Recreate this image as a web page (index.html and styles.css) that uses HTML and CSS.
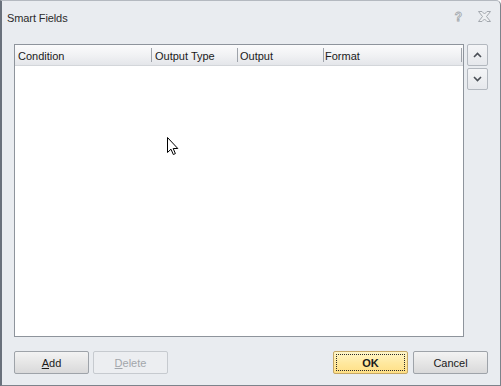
FILE: index.html
```html
<!DOCTYPE html>
<html lang="en">
<head>
	<meta charset="utf-8">
	<title>Smart Fields</title>
	<link rel="stylesheet" href="styles.css">
</head>
<body>
	<div class="window">
		<div class="titlebar">
			<span class="title">Smart Fields</span>
			<span class="help">?</span>
			<svg class="close" width="13" height="11" viewBox="0 0 13 11">
				<path d="M0.5 0.5 H4 L6.5 3 L9 0.5 H12.5 L8.5 5.5 L12.5 10.5 H9 L6.5 8 L4 10.5 H0.5 L4.5 5.5 Z" fill="#eef0f2" stroke="#a3a8ae" stroke-width="1"/>
			</svg>
		</div>
		<div class="content">
			<div class="list">
				<div class="list-head">
					<div class="col col-1">Condition</div>
					<span class="sep"></span>
					<div class="col col-2">Output Type</div>
					<span class="sep"></span>
					<div class="col col-3">Output</div>
					<span class="sep"></span>
					<div class="col col-4">Format</div>
					<span class="sep"></span>
				</div>
				<div class="list-body"></div>
			</div>
			<div class="side">
				<a href="javascript:;" class="move">
					<svg width="9" height="6" viewBox="0 0 9 6"><path d="M1 5 L4.5 1.5 L8 5" fill="none" stroke="#4a4f56" stroke-width="1.6"/></svg>
				</a>
				<a href="javascript:;" class="move">
					<svg width="9" height="6" viewBox="0 0 9 6"><path d="M1 1 L4.5 4.5 L8 1" fill="none" stroke="#4a4f56" stroke-width="1.6"/></svg>
				</a>
			</div>
		</div>
		<div class="footer">
			<div class="group">
				<a href="javascript:;" class="btn"><u>A</u>dd</a>
				<a href="javascript:;" class="btn disabled"><u>D</u>elete</a>
			</div>
			<div class="group">
				<a href="javascript:;" class="btn ok"><span class="focus">OK</span></a>
				<a href="javascript:;" class="btn cancel">Cancel</a>
			</div>
		</div>
		<svg class="cursor" width="12" height="19" viewBox="0 0 12 19">
			<path d="M0.5 0.5 L0.5 15.5 L4 12.2 L6.3 17.5 L8.4 16.6 L6.2 11.5 L10.8 11.5 Z" fill="#fff" stroke="#000" stroke-width="1"/>
		</svg>
	</div>
</body>
</html>
```

FILE: styles.css
```css
* {
	margin: 0;
	padding: 0;
	box-sizing: border-box;
	text-decoration: none;
}
body {
	width: 501px;
	height: 386px;
	overflow: hidden;
	font-family: "Liberation Sans", Arial, sans-serif;
	font-size: 11px;
	color: #1e1e1e;
}
.window {
	position: relative;
	display: flex;
	flex-direction: column;
	width: 501px;
	height: 386px;
	background: #e9ecf0;
	border-top: 1px solid #b4b9c0;
	border-left: 2px solid #69717c;
	border-right: 1px solid #7d838b;
	border-bottom: 1px solid #7d838b;
	border-top-right-radius: 5px;
}
.titlebar {
	display: flex;
	align-items: flex-start;
	height: 43px;
	padding: 11px 9px 0 5px;
}
.title {
	flex: 1;
	line-height: 13px;
	letter-spacing: -0.1px;
	color: #2b2b2b;
}
.help {
	margin-top: -1px;
	margin-right: 16px;
	font-size: 12px;
	font-weight: bold;
	line-height: 13px;
	color: #eef0f2;
	-webkit-text-stroke: 0.8px #a3a8ae;
}
.close {
	display: block;
	margin-top: -1px;
}
.content {
	display: flex;
	gap: 3px;
	padding: 0 12px;
}
.list {
	display: flex;
	flex-direction: column;
	width: 450px;
	height: 293px;
	border: 1px solid #8e949c;
	background: #fff;
}
.list-head {
	display: flex;
	align-items: center;
	height: 21px;
	background: linear-gradient(#fbfbfc, #f1f2f4 50%, #e4e6ea);
	border-bottom: 1px solid #d3d6da;
}
.col {
	padding: 2px 0 0 3px;
	line-height: 19px;
	white-space: nowrap;
	color: #1a1a1a;
}
.col-1 {
	width: 136px;
}
.col-2 {
	width: 85px;
}
.col-3 {
	width: 85px;
	padding-left: 2px;
}
.col-4 {
	width: 137px;
	padding-left: 1px;
}
.sep {
	width: 1px;
	height: 14px;
	background: #9ea3aa;
}
.list-body {
	flex: 1;
}
.side {
	display: flex;
	flex-direction: column;
	gap: 2px;
}
.move {
	display: flex;
	align-items: center;
	justify-content: center;
	width: 21px;
	height: 22px;
	border: 1px solid #b3b8bf;
	border-radius: 2px;
	background: linear-gradient(#f4f5f7, #e6e8ec);
}
.footer {
	display: flex;
	justify-content: space-between;
	padding: 14px 12px 0;
}
.group {
	display: flex;
	gap: 4px;
}
.group + .group {
	gap: 5px;
}
.btn {
	display: flex;
	align-items: center;
	justify-content: center;
	width: 75px;
	height: 23px;
	border: 1px solid #9ea3a9;
	border-radius: 2px;
	background: linear-gradient(#f3f3f3, #e6e6e6 50%, #d9d9da);
	color: #1a1a1a;
}
.btn u {
	text-decoration: underline;
}
.btn.disabled {
	border-color: #c6cacf;
	background: #eceef1;
	color: #a2a6ab;
}
.btn.ok {
	padding: 2px;
	border-color: #c5a766;
	background: linear-gradient(#fff6c8, #ffe9a0 50%, #ffdf85);
	font-weight: bold;
}
.focus {
	display: flex;
	align-items: center;
	justify-content: center;
	width: 100%;
	height: 100%;
	border: 1px dotted #2a2a2a;
}
.cursor {
	position: absolute;
	left: 165px;
	top: 136px;
}
```
